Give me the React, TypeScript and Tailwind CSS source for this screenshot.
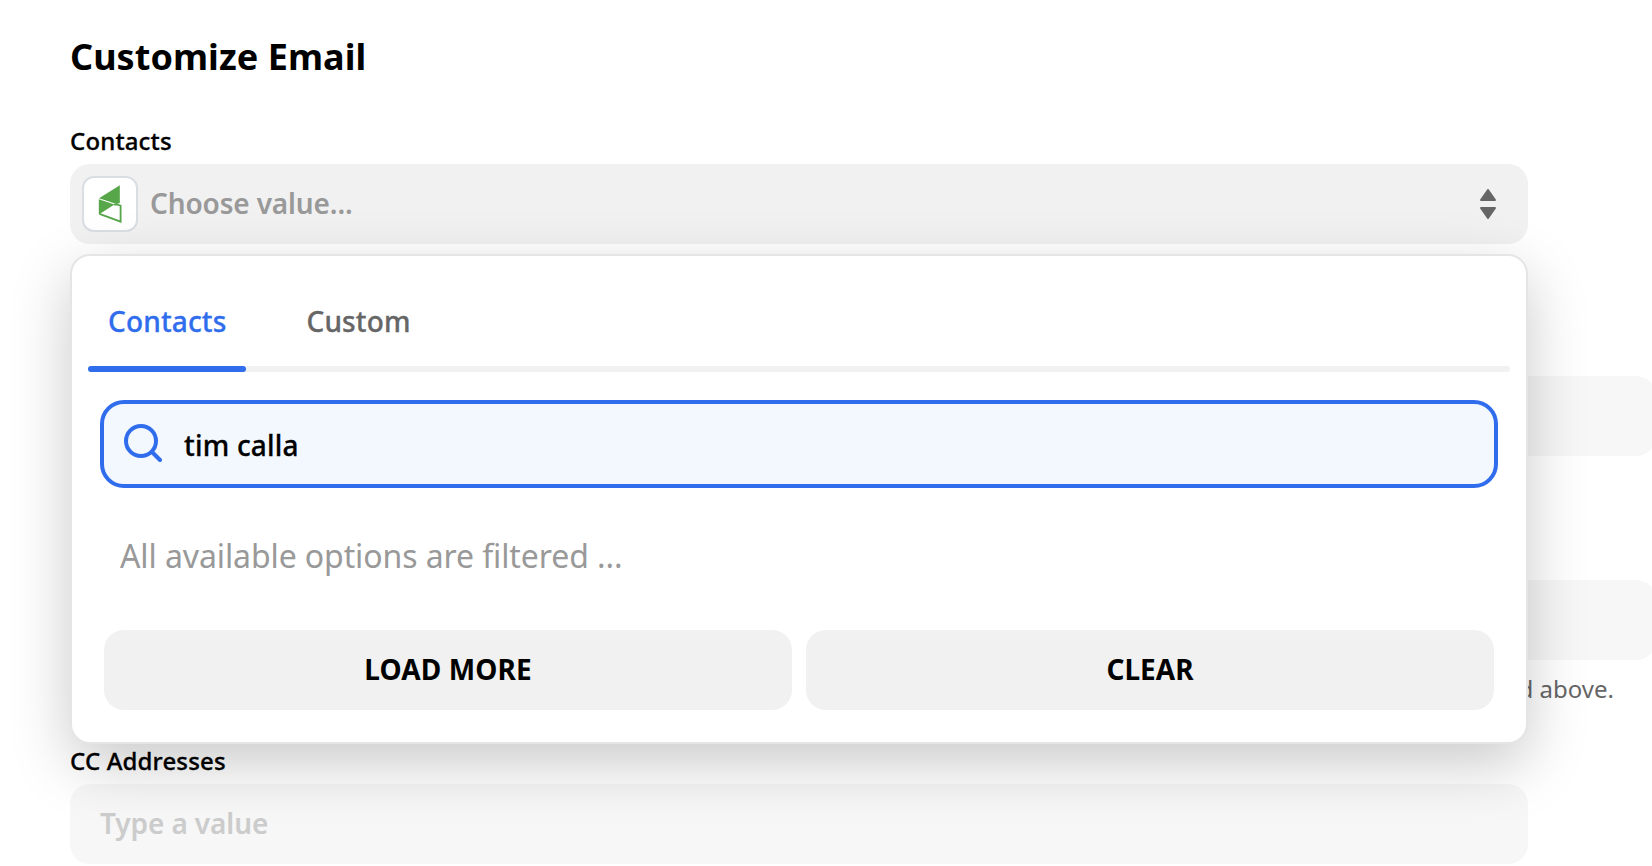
import { useState } from "react";

const TABS = ["Contacts", "Custom"];

function AppLogo() {
  return (
    <div className="flex h-14 w-14 items-center justify-center rounded-xl border-2 border-[#d9dee4] bg-white">
      <svg viewBox="0 0 24 40" className="h-10 w-6">
        <path d="M21.8 1.2V19L18.5 20L1 14.2z" fill="#57a64a" />
        <path d="M0.8 15.2L16.5 20.5L0.8 30.5z" fill="#57a64a" />
        <path d="M1.4 29.8L22.6 37.6V21.6L18.5 20.3L16 20.6" fill="none" stroke="#57a64a" strokeWidth="1.8" />
      </svg>
    </div>
  );
}

function SortArrows() {
  return (
    <svg viewBox="0 0 16 30" className="h-[30px] w-4" fill="#666" stroke="#666" strokeWidth="2" strokeLinejoin="round">
      <path d="M8 1L15 11H1z" />
      <path d="M8 29L15 19H1z" />
    </svg>
  );
}

function SearchIcon() {
  return (
    <svg viewBox="0 0 38 38" className="mb-0.5 h-[38px] w-[38px]" fill="none" stroke="#2f6ded" strokeWidth="4" strokeLinecap="round">
      <circle cx="17" cy="17" r="15" />
      <path d="M28 28L36 36" />
    </svg>
  );
}

function ValueMenu() {
  const [tab, setTab] = useState("Contacts");
  const [query, setQuery] = useState("tim calla");

  return (
    <div className="absolute top-[90px] left-0 z-10 h-[490px] w-full rounded-[20px] border-2 border-[#e5e5e5] bg-white px-4 pt-6 shadow-[0_20px_60px_rgba(0,0,0,0.21)]">
      <div className="flex h-[92px]">
        {TABS.map((name) => (
          <button
            key={name}
            onClick={() => setTab(name)}
            className={`mr-10 h-[82px] px-5 text-[28px] font-medium tracking-[0.15px] [-webkit-text-stroke:0.3px] ${
              tab === name ? "text-[#2f6ded]" : "text-[#666]"
            }`}
          >
            {name}
          </button>
        ))}
      </div>
      <div className="-mt-1.5 h-1.5 rounded-full bg-[#f1f1f1]">
        <div className="h-full w-[158px] rounded-full bg-[#2f6ded]" />
      </div>

      <div className="mx-3 mt-7 flex h-[88px] items-center rounded-3xl border-4 border-[#2f6ded] bg-[#f3f8ff] pl-5">
        <SearchIcon />
        <input
          value={query}
          onChange={(e) => setQuery(e.target.value)}
          className="ml-[22px] flex-1 pt-0.5 text-[28px] font-medium tracking-[0.2px] text-black outline-none [-webkit-text-stroke:0.3px]"
        />
      </div>

      <p className="mt-[43px] ml-8 text-[32px] leading-[50px] tracking-[-0.1px] text-[#999]">
        All available options are filtered ...
      </p>

      <div className="mx-4 mt-[49px] grid grid-cols-2 gap-3.5">
        <button className="h-20 rounded-[20px] bg-[#f1f1f1] pb-0.5 text-[28px] font-bold tracking-[0.1px] text-black">
          LOAD MORE
        </button>
        <button className="h-20 rounded-[20px] bg-[#f1f1f1] pb-0.5 text-[28px] font-bold text-black">CLEAR</button>
      </div>
    </div>
  );
}

export default function App() {
  return (
    <div className="h-[866px] w-[1652px] overflow-hidden bg-white pl-[70px] font-['Noto_Sans',sans-serif] text-black">
      <h1 className="pt-8 text-[36px] leading-[50px] font-bold tracking-[0.05px]">Customize Email</h1>

      <label className="mt-[42px] block text-2xl leading-[34px] font-medium tracking-[0.15px] [-webkit-text-stroke:0.3px]">
        Contacts
      </label>
      <div className="relative mt-1.5 w-[1458px]">
        <div className="flex h-20 items-center rounded-[20px] bg-[#f1f1f1] pr-8 pl-3">
          <AppLogo />
          <span className="ml-3 flex-1 pb-0.5 text-[28px] font-semibold tracking-[-0.15px] text-[#999]">
            Choose value...
          </span>
          <SortArrows />
        </div>
        <ValueMenu />
      </div>

      {/* indented fields, mostly covered by the open menu */}
      <div className="ml-32 w-[1458px] pt-[132px]">
        <div className="h-20 rounded-[20px] bg-[#f7f7f7]" />
        <div className="mt-[124px] h-20 rounded-[20px] bg-[#f7f7f7]" />
        <p className="mt-3 pr-[42px] text-right text-2xl leading-[34px] text-[#666]">d above.</p>
      </div>

      <label className="mt-[38px] block text-2xl leading-[34px] font-medium tracking-[0.15px] [-webkit-text-stroke:0.3px]">
        CC Addresses
      </label>
      <div className="mt-1.5 flex h-20 w-[1458px] items-center rounded-[20px] bg-[#f7f7f7] pl-[30px]">
        <span className="pb-0.5 text-[28px] font-semibold tracking-[-0.1px] text-[#ccc]">Type a value</span>
      </div>
    </div>
  );
}
